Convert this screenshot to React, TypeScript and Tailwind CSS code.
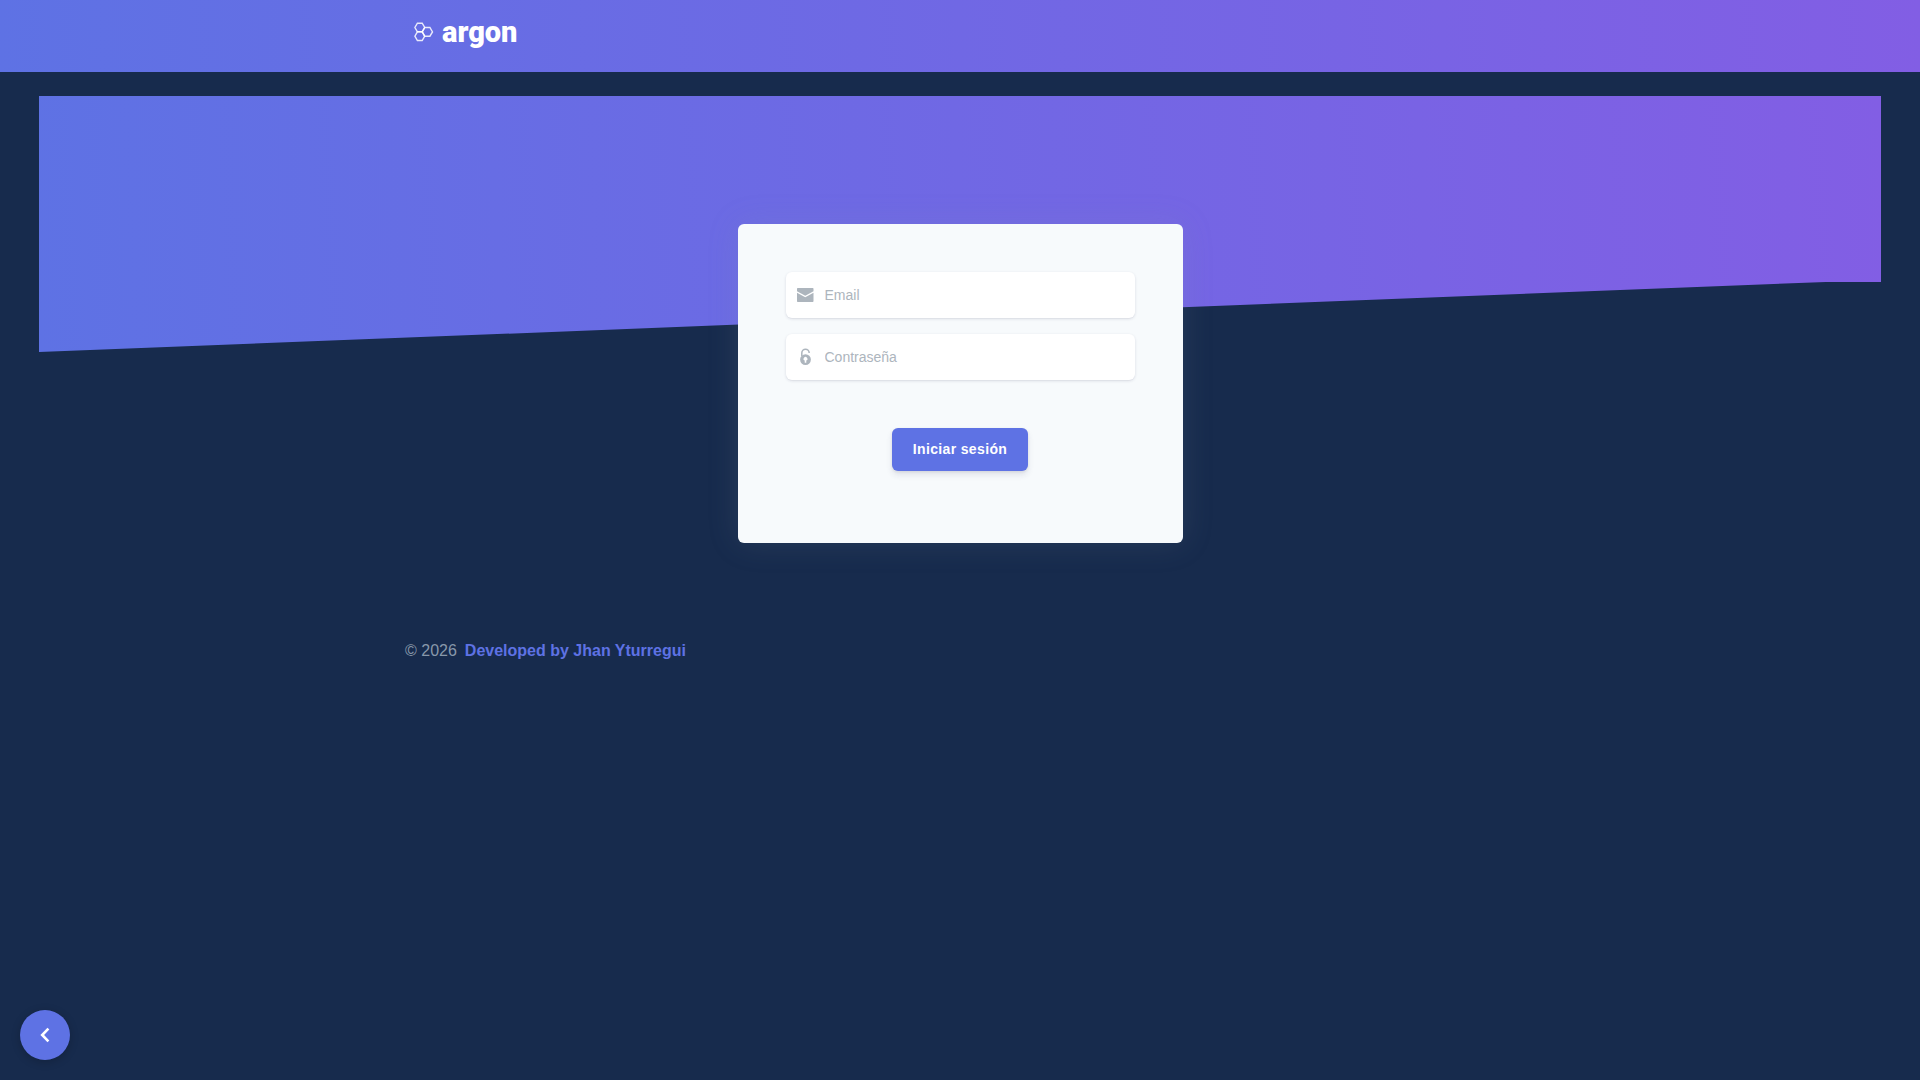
import { useState } from 'react';
import type { ComponentProps, FormEvent, ReactNode } from 'react';

function ArgonLogo() {
  return (
    <a href="#" aria-label="argon" className="flex items-center gap-2 text-white">
      <svg width="20" height="20" viewBox="0 0 20 20" fill="none" stroke="currentColor" strokeWidth="1.4" strokeOpacity="0.85" aria-hidden="true">
        <path d="M3.4 1.2h4.8l2.5 4.3-2.5 4.3H3.4L.9 5.5z" />
        <path d="M3.4 9.8h4.8l2.5 4.4-2.5 4.3H3.4L.9 14.2z" />
        <path d="M10.7 5.5h5.2l2.6 4.4-2.6 4.3h-5.2L8.2 9.8z" />
      </svg>
      <span className="font-['Roboto',sans-serif] text-[29px] leading-8 font-black">argon</span>
    </a>
  );
}

function EmailIcon() {
  return (
    <svg width="18" height="14" viewBox="0 0 18 14" fill="currentColor" aria-hidden="true">
      <path d="M2 0h14.500c.6 0 1 .4 1 1v2.200L9.250 7.700 1 3.200V1c0-.6.4-1 1-1z" />
      <path d="M1 4.800 9.250 9.300l8.250-4.500V13c0 .6-.4 1-1 1H2c-.6 0-1-.4-1-1z" />
    </svg>
  );
}

function LockIcon() {
  return (
    <svg width="18" height="18" viewBox="0 0 18 18" aria-hidden="true">
      <path d="M5.800 8V5a3.700 3.700 0 0 1 7.400 0" fill="none" stroke="currentColor" strokeWidth="1.500" />
      <path
        d="M9.500 6.200a5.400 5.400 0 1 0 0 10.800 5.400 5.400 0 0 0 0-10.800zm.8 6.400v2.200H8.700v-2.200a1.900 1.900 0 1 1 1.600 0z"
        fill="currentColor"
      />
    </svg>
  );
}

type FieldProps = ComponentProps<'input'> & { id: string; icon: ReactNode; label: string };

function Field({ id, icon, label, ...props }: FieldProps) {
  return (
    <div className="flex h-[46px] items-center rounded-md bg-white shadow-[0_1px_3px_rgba(50,50,93,0.15),0_1px_0_rgba(0,0,0,0.02)]">
      <label htmlFor={id} aria-label={label} className="flex w-[39px] shrink-0 justify-center text-[#adb5bd]">
        {icon}
      </label>
      <input
        {...props}
        id={id}
        aria-label={label}
        placeholder={label}
        className="h-full min-w-0 flex-1 bg-transparent pr-3 text-sm text-[#8898aa] outline-none placeholder:text-[#adb5bd] placeholder:opacity-100"
      />
    </div>
  );
}

export default function App() {
  const [email, setEmail] = useState('');
  const [password, setPassword] = useState('');

  const handleSubmit = (e: FormEvent) => {
    e.preventDefault();
  };

  return (
    <div className="min-h-screen bg-[#172b4d] font-['Liberation_Sans',sans-serif]">
      <nav className="h-[72px] bg-[linear-gradient(87deg,#5e72e4,#825ee4)]">
        <div className="mx-auto max-w-[1140px] px-6 pt-4">
          <ArgonLogo />
        </div>
      </nav>

      {/* Slanted banner behind the card */}
      <div className="mx-[39px] mt-6 h-64 bg-[linear-gradient(87deg,#5e72e4,#825ee4)] [clip-path:polygon(0_0,100%_0,100%_186px,97%_186px,0_100%)]" />

      <main className="relative -mt-32 flex justify-center px-4">
        <form
          onSubmit={handleSubmit}
          className="flex w-full max-w-[445px] flex-col rounded-md bg-[#f7fafc] px-12 pt-12 pb-[72px] shadow-[0_0_32px_rgba(136,152,170,0.15)]"
        >
          <div className="flex flex-col gap-4">
            <Field
              id="email"
              icon={<EmailIcon />}
              label="Email"
              type="email"
              value={email}
              onChange={(e) => setEmail(e.target.value)}
            />
            <Field
              id="password"
              icon={<LockIcon />}
              label="Contraseña"
              type="password"
              value={password}
              onChange={(e) => setPassword(e.target.value)}
            />
          </div>
          <button
            type="submit"
            className="mt-12 self-center rounded-md bg-[#5e72e4] px-[21px] py-[11px] text-sm leading-[21px] font-semibold tracking-wide text-white shadow-[0_4px_6px_rgba(50,50,93,0.11),0_1px_3px_rgba(0,0,0,0.08)]"
          >
            Iniciar sesión
          </button>
        </form>
      </main>

      <footer className="mx-auto mt-24 flex max-w-[1140px] gap-2 px-[15px] leading-6 text-[#8898aa]">
        <span>© 2026</span>
        <a href="#" className="font-semibold text-[#5e72e4]">
          Developed by Jhan Yturregui
        </a>
      </footer>

      <button
        type="button"
        aria-label="Volver"
        className="fixed bottom-5 left-5 flex size-[50px] items-center justify-center rounded-full bg-[#5e72e4] text-white shadow-[0_2px_10px_rgba(0,0,0,0.2)]"
      >
        <svg width="10" height="16" viewBox="0 0 10 16" fill="none" stroke="currentColor" strokeWidth="2.6" aria-hidden="true">
          <path d="M8.400 1.700 2.200 8l6.200 6.300" />
        </svg>
      </button>
    </div>
  );
}
